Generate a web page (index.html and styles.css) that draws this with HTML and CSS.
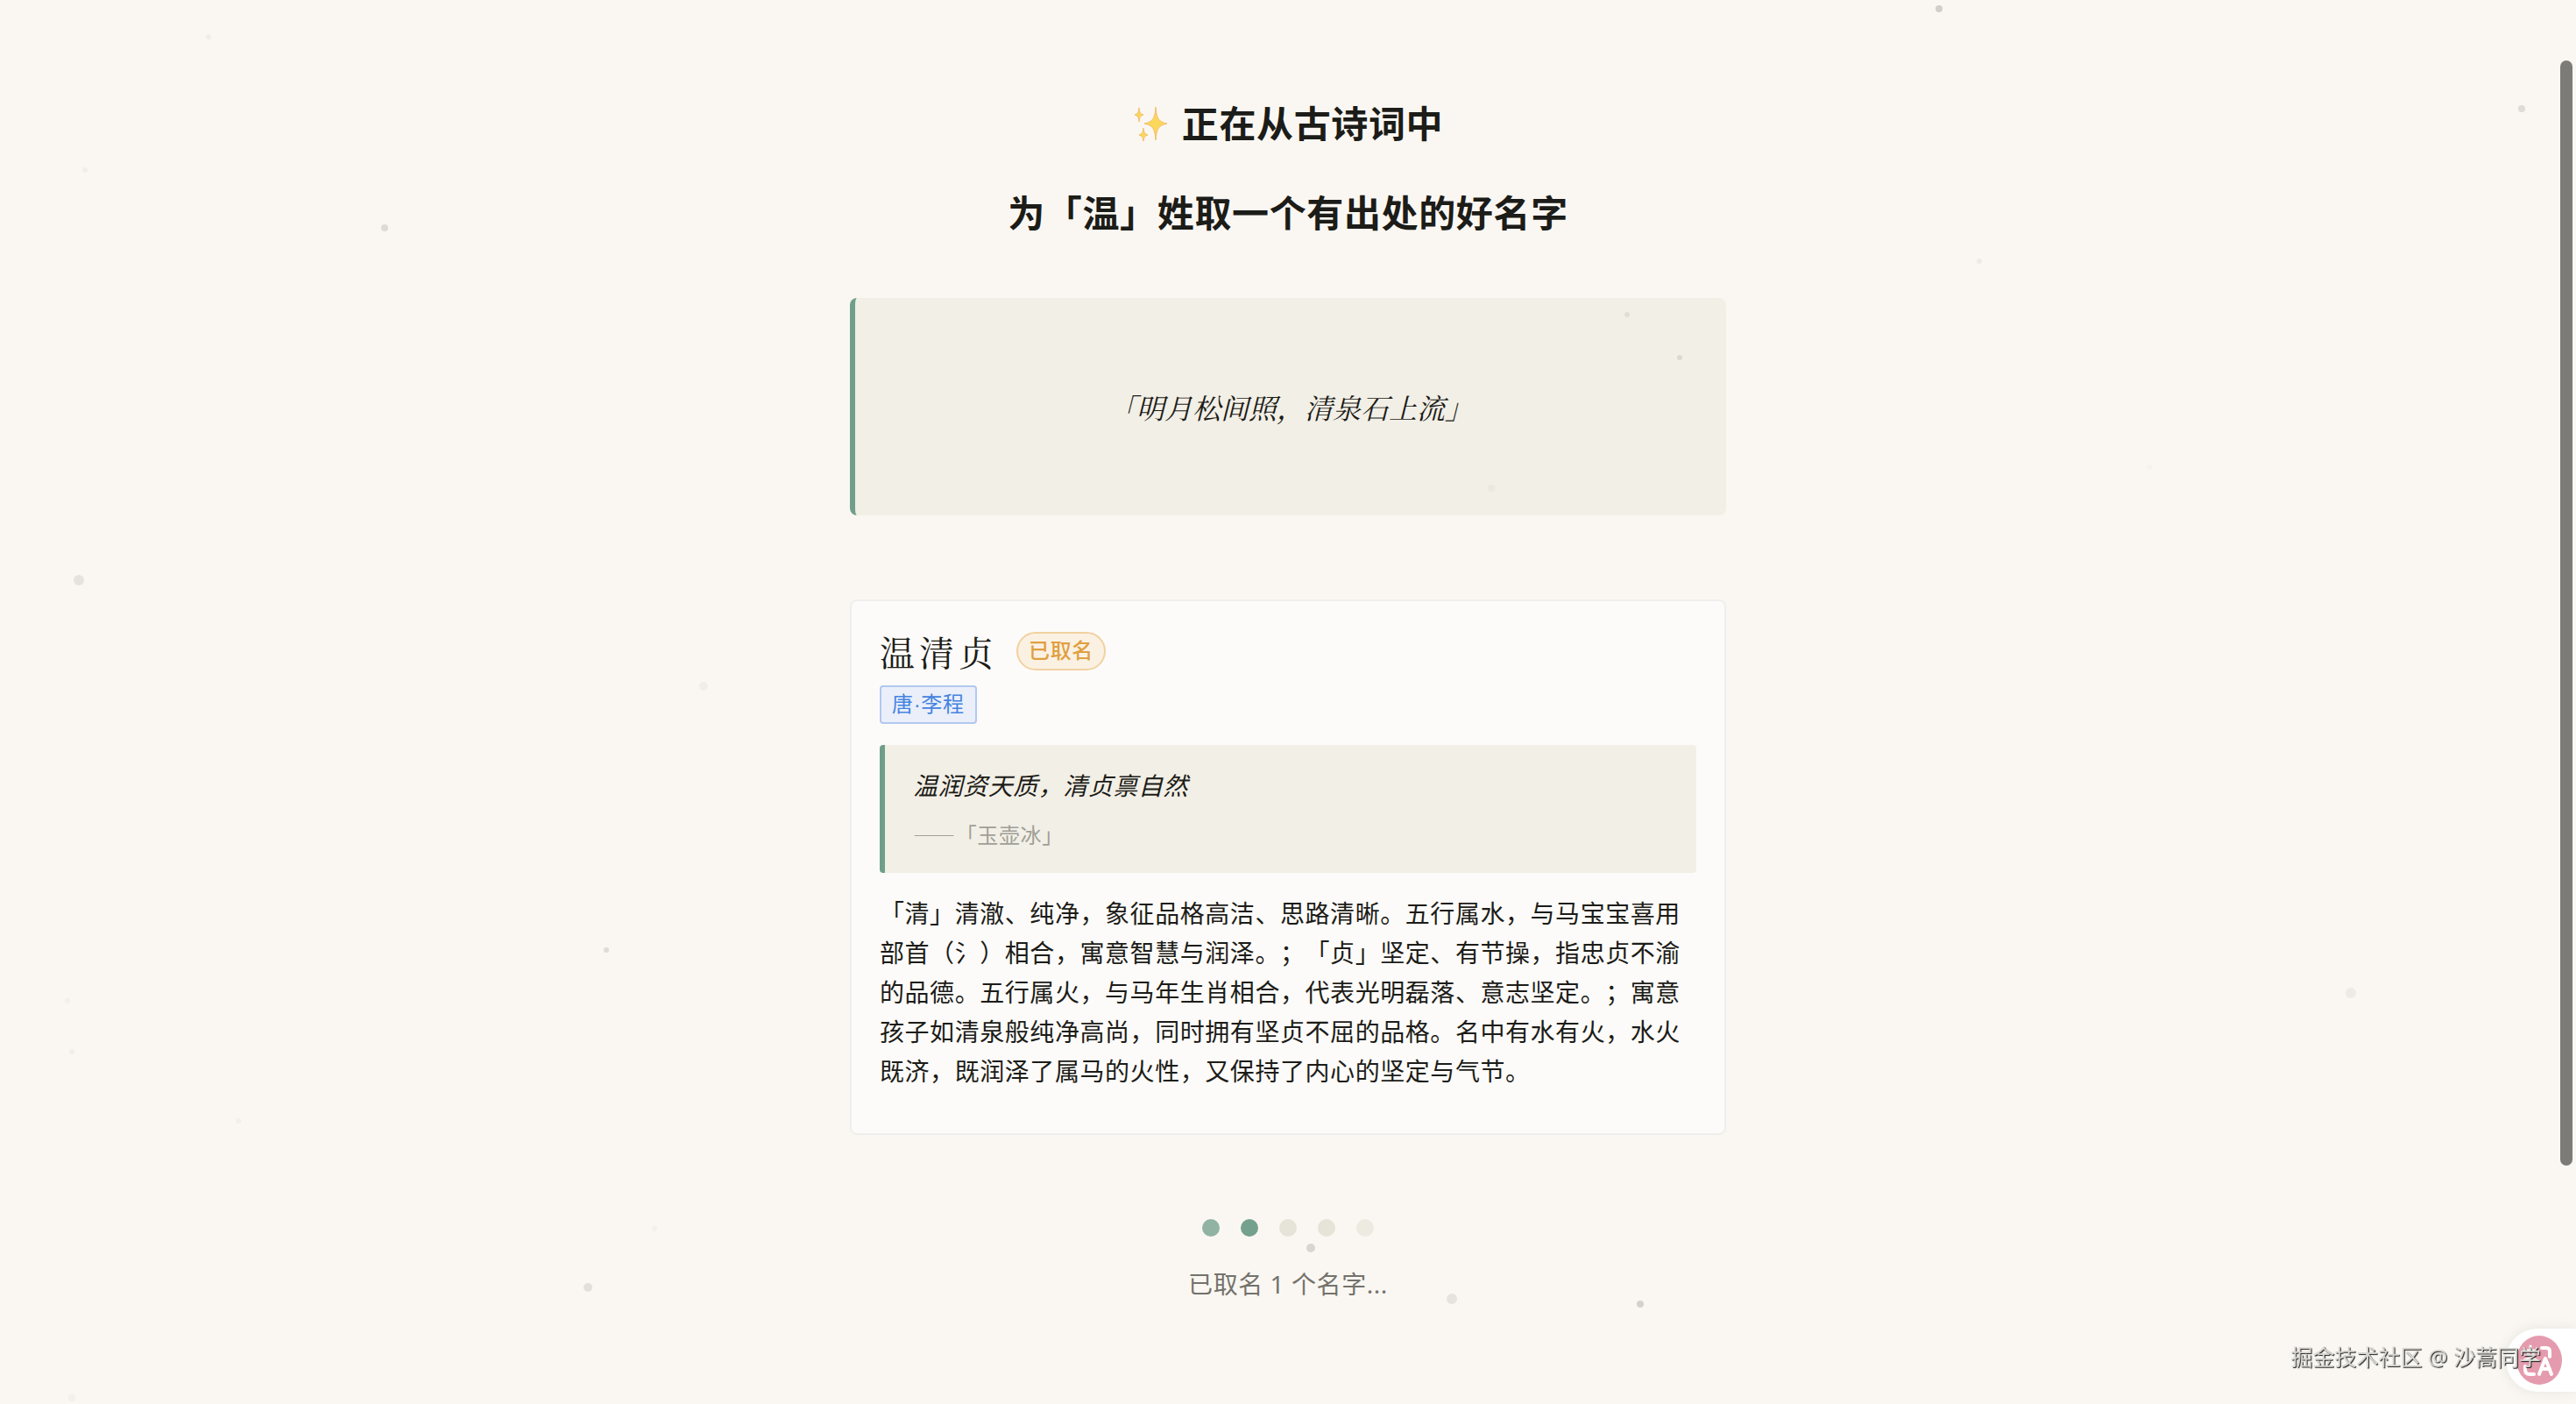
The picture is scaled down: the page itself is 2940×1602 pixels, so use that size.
FILE: index.html
```html
<!DOCTYPE html>
<html lang="zh-CN">
<head>
  <meta charset="UTF-8" />
  <meta name="viewport" content="width=device-width, initial-scale=1" />
  <title>诗词取名</title>
  <link rel="stylesheet" href="styles.css">
</head>
<body>

  <!-- floating ink particles -->
  <svg class="particles" aria-hidden="true">
    <g fill="#1c1c18">
      <circle cx="2213" cy="10" r="4" opacity="0.18" />
      <circle cx="2878" cy="124" r="4" opacity="0.12" />
      <circle cx="439" cy="260" r="4" opacity="0.13" />
      <circle cx="238" cy="42" r="3" opacity="0.04" />
      <circle cx="97" cy="194" r="3" opacity="0.04" />
      <circle cx="2259" cy="298" r="3" opacity="0.05" />
      <circle cx="90" cy="662" r="6" opacity="0.09" />
      <circle cx="803" cy="783" r="5" opacity="0.04" />
      <circle cx="692" cy="1084" r="3" opacity="0.12" />
      <circle cx="77" cy="1142" r="3" opacity="0.03" />
      <circle cx="82" cy="1200" r="3" opacity="0.04" />
      <circle cx="272" cy="1279" r="3" opacity="0.03" />
      <circle cx="747" cy="1402" r="3" opacity="0.03" />
      <circle cx="671" cy="1469" r="5" opacity="0.1" />
      <circle cx="2683" cy="1133" r="6" opacity="0.05" />
      <circle cx="2453" cy="533" r="3" opacity="0.02" />
      <circle cx="82" cy="1595" r="4" opacity="0.03" />
      <circle cx="1857" cy="359" r="3" opacity="0.08" />
      <circle cx="1917" cy="408" r="3" opacity="0.1" />
      <circle cx="1702" cy="557" r="4" opacity="0.03" />
      <circle cx="1496" cy="1424" r="5" opacity="0.15" />
      <circle cx="1657" cy="1482" r="6" opacity="0.09" />
      <circle cx="1872" cy="1488" r="4" opacity="0.17" />
    </g>
  </svg>

  <main class="container">
    <h1 class="title">
      <span class="title-line">
        <svg class="sparkles" viewBox="0 0 40 40" aria-hidden="true">
          <path d="M26 1C27 14 29 18 39 20C29 22 27 26 26 39C25 26 23 22 13 20C23 18 25 14 26 1Z" />
          <path d="M7 2C7.500 7 8.500 9 12 10C8.500 11 7.500 13 7 18C6.500 13 5.500 11 2 10C5.500 9 6.500 7 7 2Z" />
          <path d="M12 25C12.500 30 13.500 31.500 17 33C13.500 34 12.500 36 12 40C11.500 36 10.500 34 7 33C10.500 31.500 11.500 30 12 25Z" />
        </svg>
        正在从古诗词中
      </span>
      <span class="title-line">为「温」姓取一个有出处的好名字</span>
    </h1>

    <section class="verse">
      <p>「明月松间照，清泉石上流」</p>
    </section>

    <article class="card">
      <header class="card-header">
        <h2 class="name">温清贞</h2>
        <span class="status">已取名</span>
      </header>
      <span class="author">唐·李程</span>

      <blockquote class="source">
        <p class="source-text">温润资天质，清贞禀自然</p>
        <cite class="source-title">——「玉壶冰」</cite>
      </blockquote>

      <p class="meaning">「清」清澈、纯净，象征品格高洁、思路清晰。五行属水，与马宝宝喜用部首（氵）相合，寓意智慧与润泽。；「贞」坚定、有节操，指忠贞不渝的品德。五行属火，与马年生肖相合，代表光明磊落、意志坚定。；寓意孩子如清泉般纯净高尚，同时拥有坚贞不屈的品格。名中有水有火，水火既济，既润泽了属马的火性，又保持了内心的坚定与气节。</p>
    </article>

    <div class="loading">
      <div class="dots">
        <span class="dot fading"></span>
        <span class="dot active"></span>
        <span class="dot"></span>
        <span class="dot"></span>
        <span class="dot faint"></span>
      </div>
      <p class="progress">已取名 1 个名字...</p>
    </div>
  </main>

  <div class="scrollbar"></div>

  <button class="translate" type="button" aria-label="翻译">
    <svg viewBox="0 0 52 56" aria-hidden="true">
      <ellipse cx="26" cy="28" rx="26" ry="28" fill="#e59bae" />
      <g fill="none" stroke="#fff" stroke-width="4" stroke-linecap="round" stroke-linejoin="round">
        <path d="M29 14h5q4 0 4 4v6" />
        <path d="M10 35v4q0 5 5 5h5" />
        <path d="M26 44l7-18 7 18M29 38h9" />
        <path d="M9 17h14M16 12v5M12 17q2 8 11 11M21 17q-2 8-12 11" stroke-width="3" />
      </g>
    </svg>
  </button>
  <div class="watermark">掘金技术社区 @ 沙蒿同学</div>

</body>
</html>
```
FILE: styles.css
```css
* {
  box-sizing: border-box;
}

body {
  margin: 0;
  min-height: 100vh;
  background: #faf7f2;
  color: #1c1c18;
  font-family: "Noto Sans", "Noto Sans CJK SC", sans-serif;
  font-size: 32px;
  letter-spacing: 0.02em;
  text-spacing-trim: space-all;
}

h1, h2, p, blockquote {
  margin: 0;
}

.particles {
  position: fixed;
  inset: 0;
  width: 100%;
  height: 100%;
  pointer-events: none;
  z-index: 1;
}

.container {
  width: 100%;
  max-width: 1000px;
  margin: 0 auto;
  padding: 90px 0 96px;
}

.title {
  margin-bottom: 46px;
  font-size: 42px;
  font-weight: 700;
  line-height: 102px;
}

.title-line {
  display: flex;
  align-items: center;
  justify-content: center;
  gap: 16px;
}

.sparkles {
  width: 40px;
  height: 40px;
  fill: #fbd75b;
  stroke: #f3bd6a;
  stroke-width: 1;
}

.verse {
  display: flex;
  align-items: center;
  justify-content: center;
  min-height: 248px;
  margin-bottom: 96px;
  border-left: 6px solid #6f9f8a;
  border-radius: 8px;
  background: #f2efe6;
  font-family: "Noto Serif CJK SC", "Noto Sans CJK SC", serif;
  font-size: 32px;
  font-style: italic;
  letter-spacing: normal;
}

.card {
  padding: 32px 32px 48px;
  border: 2px solid #f0eeec;
  border-radius: 8px;
  background: #fcfbf9;
}

.card-header {
  display: flex;
  align-items: center;
  gap: 21px;
  margin-bottom: 14px;
}

.name {
  font-family: "Noto Serif CJK SC", "Noto Sans CJK SC", serif;
  font-size: 40px;
  font-weight: 400;
  line-height: 50px;
  letter-spacing: 5px;
}

.status, .author {
  display: block;
  width: fit-content;
  padding: 0 12px;
  border: 2px solid;
  font-family: "Liberation Sans", "Noto Sans CJK SC", sans-serif;
  font-size: 24px;
  line-height: 40px;
}

.status {
  border-color: #f2d1a0;
  border-radius: 22px;
  background: #fbf1e3;
  color: #e09f40;
  font-weight: 500;
}

.author {
  border-color: #b3c8ef;
  border-radius: 4px;
  background: #eaeffa;
  color: #4583e0;
}

.source {
  margin: 24px 0 24px;
  padding: 20px 32px 24px;
  border-left: 6px solid #6f9f8a;
  border-radius: 4px;
  background: #f2efe6;
}

.source-text {
  margin-bottom: 10px;
  font-size: 28px;
  font-style: italic;
  line-height: 52px;
  letter-spacing: 0.02em;
}

.source-title {
  display: block;
  color: #a09f97;
  font-family: "Noto Sans CJK SC", sans-serif;
  font-size: 24px;
  font-style: normal;
  line-height: 40px;
}

.meaning {
  font-size: 28px;
  line-height: 45px;
  letter-spacing: 0.02em;
}

.loading {
  display: flex;
  flex-direction: column;
  align-items: center;
  gap: 32px;
  margin-top: 96px;
}

.dots {
  display: flex;
  gap: 24px;
}

.dot {
  width: 20px;
  height: 20px;
  border-radius: 50%;
  background: #e6e3d8;
}

.dot.fading {
  background: #90b3a3;
}

.dot.active {
  background: #74a18e;
}

.dot.faint {
  background: #edeae2;
}

.progress {
  color: #74726c;
  font-size: 28px;
  line-height: 44px;
  letter-spacing: 0.02em;
}

.scrollbar {
  position: fixed;
  top: 69px;
  right: 4px;
  width: 14px;
  height: 1261px;
  border-radius: 7px;
  background: #7d7b78;
}

.translate {
  position: fixed;
  right: 0;
  bottom: 14px;
  display: flex;
  align-items: center;
  width: 80px;
  height: 72px;
  padding: 0 0 0 12px;
  border: none;
  border-radius: 36px 0 0 36px;
  background: #fff;
  box-shadow: 0 0 16px rgba(0, 0, 0, 0.08);
  cursor: pointer;
}

.translate svg {
  width: 52px;
  height: 56px;
}

.watermark {
  position: fixed;
  right: 40px;
  bottom: 36px;
  color: #d8d6d2;
  font-size: 25px;
  line-height: 36px;
  letter-spacing: normal;
  text-shadow: 1px 1px 1px #1c1c18;
}
```
